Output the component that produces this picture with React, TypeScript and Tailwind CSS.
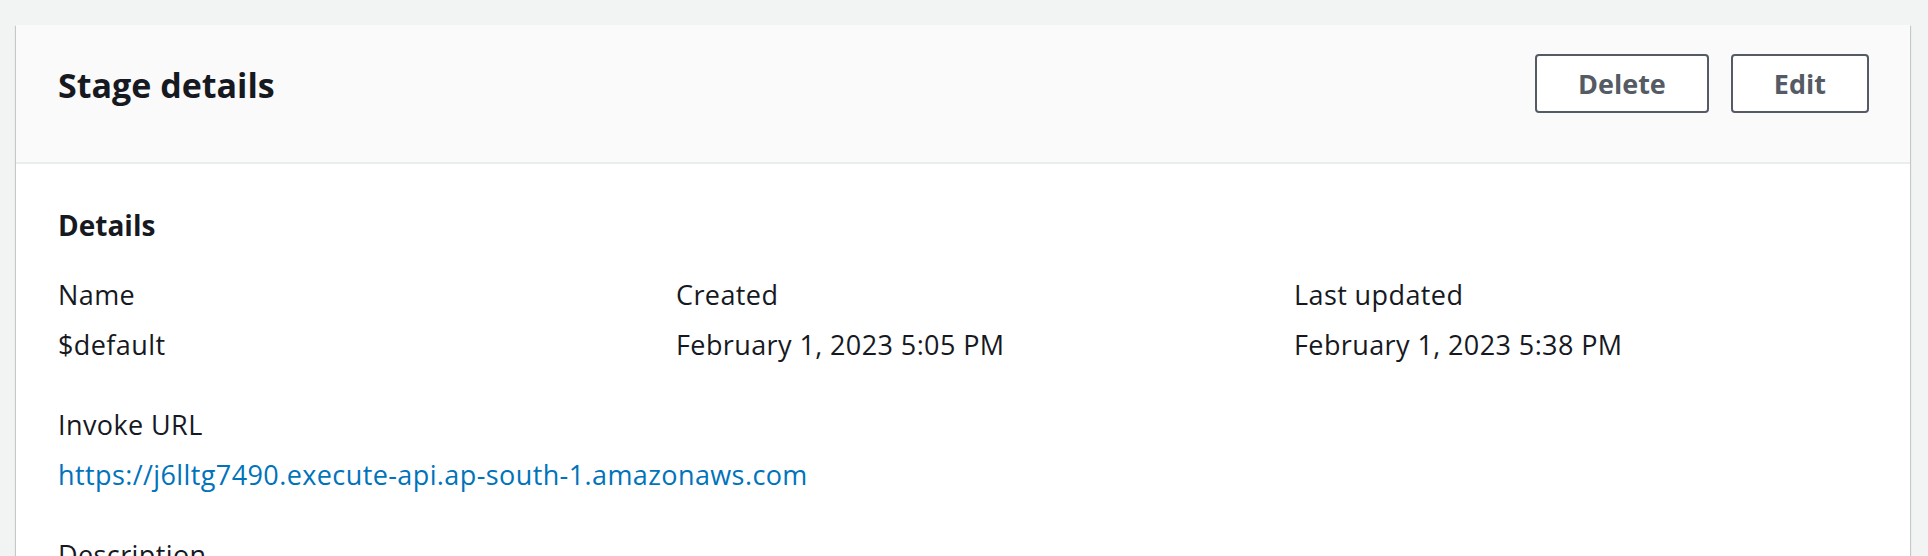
import React from "react";

const font = { fontFamily: '"Open Sans", "Noto Sans", Arial, sans-serif' };

function Pair({ label, value, link }: { label: string; value: string; link?: boolean }) {
  return (
    <div className="flex flex-col gap-[10px]">
      <div className="text-[27px] leading-[40px] tracking-[0.4px] text-[#16191f]">{label}</div>
      <div
        className={
          "text-[27px] leading-[40px] tracking-[0.4px] " + (link ? "text-[#0073bb]" : "text-[#16191f]")
        }
      >
        {value}
      </div>
    </div>
  );
}

export default function App() {
  return (
    <div className="min-h-[556px] bg-[#f2f3f3] pl-[16px] pr-[18px] pt-[25px] overflow-hidden" style={font}>
      <div className="bg-white shadow-[0_1px_1px_0_rgba(0,28,36,0.3),1px_1px_1px_0_rgba(0,28,36,0.15),-1px_1px_1px_0_rgba(0,28,36,0.15)]">
        <div className="bg-[#fafafa] border-b-2 border-[#eaeded] flex items-start justify-between pl-[42px] pr-[41px] pt-[29px] pb-[47px]">
          <h2 className="text-[34px] leading-[59px] font-bold text-[#16191f] pt-[2px]">Stage details</h2>
          <div className="flex gap-[22px]">
            <button className="h-[59px] px-[41px] border-2 border-[#545b64] rounded-[4px] bg-white text-[#545b64] font-bold text-[27px] leading-none">
              Delete
            </button>
            <button className="h-[59px] px-[41px] border-2 border-[#545b64] rounded-[4px] bg-white text-[#545b64] font-bold text-[27px] leading-none">
              Edit
            </button>
          </div>
        </div>
        <div className="pl-[42px] pr-[41px] pt-[41px] pb-[40px]">
          <h3 className="text-[28px] leading-[40px] font-bold text-[#16191f]">Details</h3>
          <div className="mt-[30px] flex flex-col gap-[40px]">
            <div className="grid grid-cols-3 gap-x-[43px]">
              <Pair label="Name" value="$default" />
              <Pair label="Created" value="February 1, 2023 5:05 PM" />
              <Pair label="Last updated" value="February 1, 2023 5:38 PM" />
            </div>
            <Pair label="Invoke URL" value="https://j6lltg7490.execute-api.ap-south-1.amazonaws.com" link />
            <Pair label="Description" value="-" />
          </div>
        </div>
      </div>
    </div>
  );
}
